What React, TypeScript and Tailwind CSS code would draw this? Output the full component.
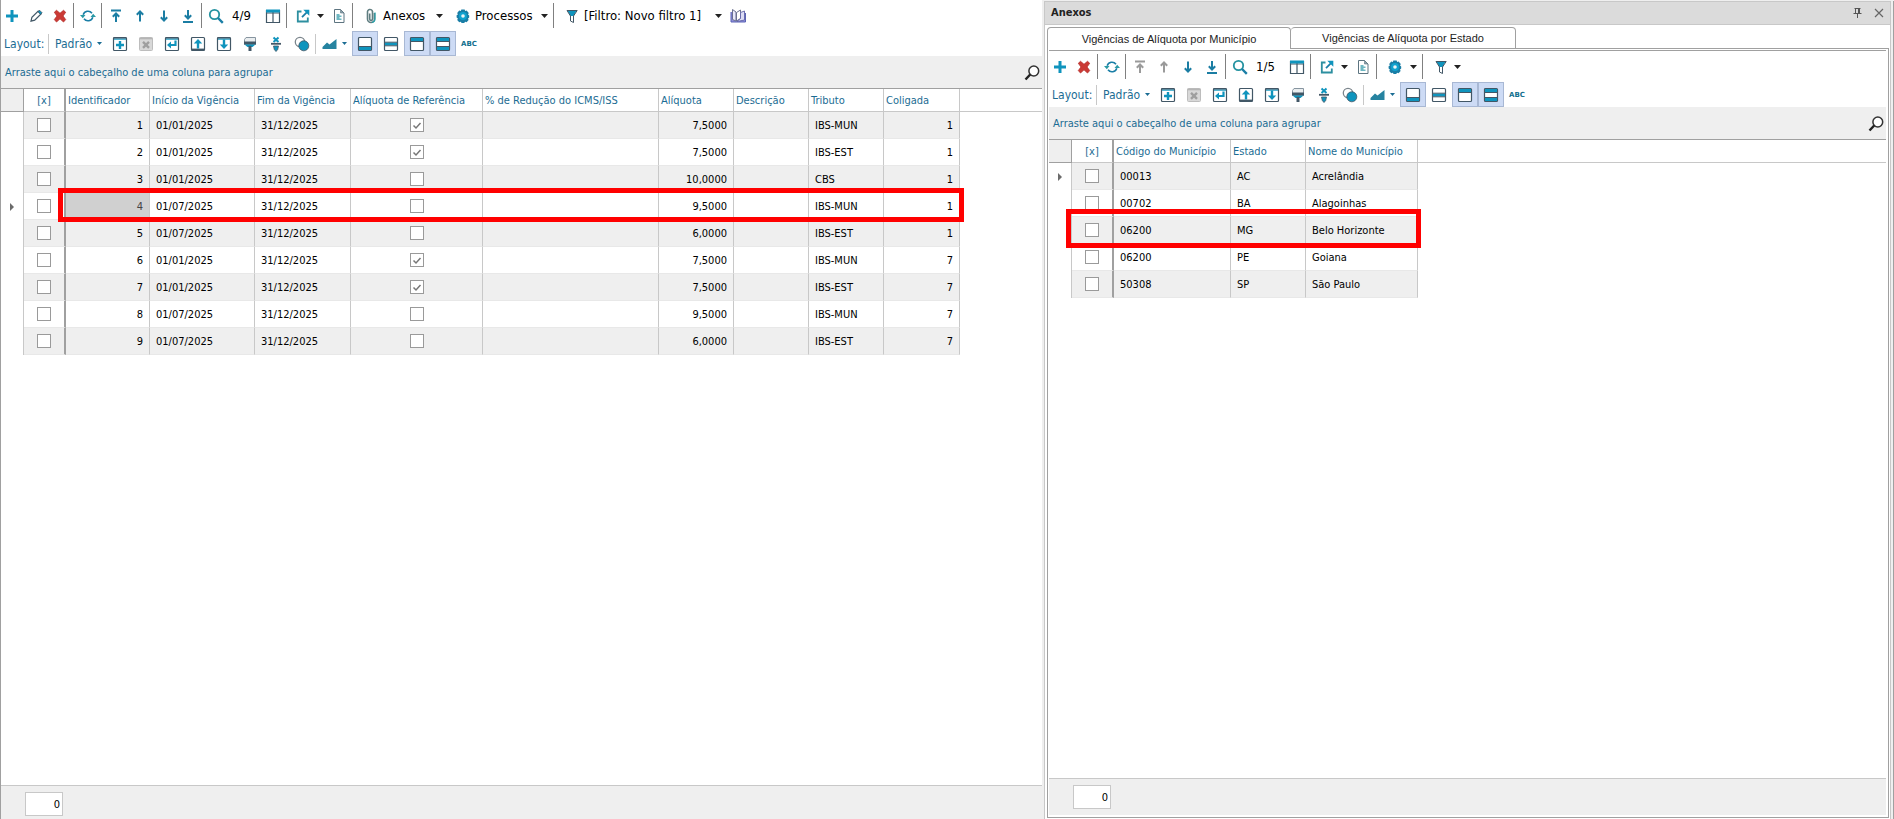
import React, { useState } from 'react';

/* ---------- Icons ---------- */

const TEAL = '#0f94bd';
const SLATE = '#425766';
const BLUE = '#1a7ea6';

const Svg = ({ children, w = 16, h = 16 }: { children: React.ReactNode; w?: number; h?: number }) => (
  <svg width={w} height={h} viewBox={`0 0 ${w} ${h}`} fill="none" className="shrink-0" aria-hidden="true">
    {children}
  </svg>
);

const PlusIcon = () => (
  <Svg><path d="M6.5 2h3v4.5H14v3H9.500V14h-3V9.500H2v-3h4.500z" fill={TEAL} /></Svg>
);

const PencilIcon = () => (
  <Svg>
    <path d="M3 13.2l.9-3.900 6.300-6.200 2.800 2.800-6.300 6.300z" stroke={SLATE} strokeWidth="1.2" />
    <path d="M10 3.800l1.500-1.600 2.600 2.600-1.500 1.600z" fill={TEAL} stroke={SLATE} strokeWidth=".8" />
  </Svg>
);

const DeleteIcon = () => (
  <Svg>
    <path d="M2.300 4.300l2.200-2L8 5.300l3.500-3 2.200 2L11 8l2.700 3.600-2.200 2.400L8 10.800 4.500 14l-2.200-2.400L5 8z" fill="#cb3a35" stroke="#b52f2b" strokeWidth=".8" />
  </Svg>
);

const RefreshIcon = () => (
  <Svg>
    <path d="M3.200 6.800A5 5 0 0 1 12 5.200M12.800 9.200A5 5 0 0 1 4 10.800" stroke={BLUE} strokeWidth="1.600" />
    <path d="M0 7h5.500L2.800 10.200zM16 9h-5.500l2.700-3.200z" fill="#2a9aa5" />
  </Svg>
);

const arrowPaths = {
  first: 'M3 2.500h10M8 14V5.500M4.800 8.700L8 5.500l3.200 3.200',
  prev: 'M8 13.500V3.500M4.800 6.700L8 3.500l3.200 3.200',
  next: 'M8 2.500v10M4.800 9.300L8 12.500l3.200-3.200',
  last: 'M3 14h10M8 2v8.500M4.800 7.300L8 10.500l3.200-3.200',
};

const ArrowIcon = ({ kind, muted }: { kind: keyof typeof arrowPaths; muted?: boolean }) => (
  <Svg><path d={arrowPaths[kind]} stroke={muted ? '#9a9a9a' : '#1b7da3'} strokeWidth="2" /></Svg>
);

const SearchIcon = () => (
  <Svg>
    <circle cx="6.500" cy="6.500" r="4.700" stroke="#2492a0" strokeWidth="1.800" />
    <path d="M10 10l4.800 4.800" stroke={BLUE} strokeWidth="2.400" />
  </Svg>
);

const ColumnsIcon = () => (
  <Svg>
    <path d="M1.500 2v12.500h13V2M8 2v12.500M1 5h14" stroke={SLATE} strokeWidth="1.200" />
    <rect x="1" y="1.500" width="14" height="3" fill={TEAL} />
  </Svg>
);

const ExportIcon = () => (
  <Svg>
    <path d="M6.500 3.500H2.800v10h10V9.500" stroke="#2d8fa0" strokeWidth="1.800" />
    <path d="M7 9.200l5-5" stroke={BLUE} strokeWidth="1.800" />
    <path d="M8.300 1.700h6v6z" fill={TEAL} />
  </Svg>
);

const DocIcon = () => (
  <Svg>
    <path d="M3.500 1.500h6L13 5v9.500H3.500z" stroke="#5d7480" />
    <path d="M9.500 1.500V5H13z" fill="#8ba2ac" stroke="#5d7480" strokeWidth=".6" />
    <path d="M5.500 6h3v1.500h2V9h-2v1.500h2V12h-5z" fill="#6db7c2" />
  </Svg>
);

const ClipIcon = () => (
  <Svg>
    <path d="M11.500 5v6a3.500 3.500 0 0 1-7 0V4.500a2.500 2.500 0 0 1 5-1V11a1.400 1.400 0 0 1-2.800 0V5.500" stroke="#5f7d80" strokeWidth="1.600" />
    <path d="M12 4.500V11a3.700 3.700 0 0 1-3 3.500" stroke="#25a3ac" strokeWidth="1.200" />
  </Svg>
);

const GearIcon = () => (
  <Svg>
    <path d="M6.300 1.500h3.400l.4 1.600 1.500-.6 2.200 2.500-.8 1.400 1.200 1v2.200l-1.200.8.600 1.600-2 2.200-1.500-.5-.9 1.300H6.600l-.8-1.300-1.600.5-2-2.200.7-1.500-1.300-.9V7.200L2.900 6.500 2.200 5l2-2.500 1.700.6z" fill={BLUE} />
    <circle cx="8" cy="8" r="4" fill="#10a2cf" />
    <circle cx="8" cy="8" r="1.800" fill="#eef4f6" />
  </Svg>
);

const FunnelIcon = () => (
  <Svg>
    <path d="M3 2h10L9.500 8H6.500z" fill={TEAL} />
    <path d="M3 2.500h10.200L9.500 8v6.500l-3-1.500V8z" stroke={SLATE} />
  </Svg>
);

const BookIcon = () => (
  <Svg w={17}>
    <path d="M1 4v10h14.500V5" fill="#8f8fdc" stroke="#5b63b5" />
    <path d="M2.500 1.500L6 4v9l-3.500-1.500z" fill="#e9e9fb" stroke="#6c7290" />
    <path d="M6.500 13V4.500L10.500 2v8.500z" fill="#fff" stroke="#6c7290" />
    <path d="M10.500 4.500L14.500 3v9l-7.500 1.500 3.500-3z" fill="#dcdcf4" stroke="#6264a8" strokeWidth=".9" />
  </Svg>
);

const Caret = ({ small }: { small?: boolean }) => (
  <Svg w={7} h={4}>
    <path d={small ? 'M1 0h5L3.500 3z' : 'M0 0h7L3.500 4z'} fill={small ? '#1b6c93' : '#222'} />
  </Svg>
);

const Frame = () => <rect x="1.500" y="1.500" width="13" height="13" rx="1" fill="#fff" stroke={SLATE} strokeWidth="1.200" />;

const FrameHead = () => (
  <>
    <path d="M1.500 2h13" stroke={SLATE} strokeWidth="1.400" />
    <path d="M2 3.200h12" stroke={TEAL} />
  </>
);

const AddLayoutIcon = () => (
  <Svg>
    <Frame />
    <FrameHead />
    <path d="M8 5v8M4 9h8" stroke={TEAL} strokeWidth="2.400" />
  </Svg>
);

const RemoveLayoutIcon = () => (
  <Svg>
    <rect x="1.500" y="1.500" width="13" height="13" rx="1" fill="#d8d8d8" stroke="#bdbdbd" />
    <path d="M1.500 2.500h13" stroke="#b5b5b5" strokeWidth="1.600" />
    <path d="M5 5.800l6 6M11 5.800l-6 6" stroke="#9f9f9f" strokeWidth="2.400" />
  </Svg>
);

const RestoreLayoutIcon = () => (
  <Svg>
    <Frame />
    <FrameHead />
    <path d="M11.500 4.500V9H6" stroke={TEAL} strokeWidth="2.200" />
    <path d="M3 9l4-3.500v7z" fill={TEAL} />
  </Svg>
);

const UploadLayoutIcon = () => (
  <Svg>
    <Frame />
    <path d="M1.500 13.500h13" stroke={SLATE} strokeWidth="1.800" />
    <path d="M8 12.500V6" stroke={TEAL} strokeWidth="2.400" />
    <path d="M3.800 7.500L8 3l4.200 4.500z" fill={TEAL} />
  </Svg>
);

const DownloadLayoutIcon = () => (
  <Svg>
    <Frame />
    <FrameHead />
    <path d="M8 3.500V10" stroke={TEAL} strokeWidth="2.400" />
    <path d="M3.800 8.500L8 13l4.200-4.500z" fill={TEAL} />
  </Svg>
);

const BrushIcon = () => (
  <Svg>
    <path d="M2.500 3.500l1.500-2h9.500v7h-11z" fill="#e9edef" stroke="#8795a0" />
    <path d="M2 5.500h12V8.500H2z" fill={SLATE} />
    <path d="M2.500 8.500h11l-3 2.500h-5z" fill={TEAL} />
    <path d="M6.500 10h3v5h-3z" fill={SLATE} />
  </Svg>
);

const ClearBrushIcon = () => (
  <Svg>
    <path d="M5.500 1.500l5 4.500M10.500 1.500l-5 4.500" stroke={TEAL} strokeWidth="2" />
    <path d="M3 7.800h10" stroke={SLATE} strokeWidth="1.800" />
    <path d="M5.500 10h5l-.8 3.500L8 15.500l-1.700-2z" fill={TEAL} stroke={SLATE} strokeWidth=".8" />
  </Svg>
);

const CirclesIcon = () => (
  <Svg>
    <circle cx="6" cy="6" r="4.700" fill="#fff" stroke="#7b858c" strokeWidth="1.300" />
    <circle cx="9.800" cy="9.800" r="5" fill={TEAL} stroke={SLATE} strokeWidth=".8" />
  </Svg>
);

const ChartIcon = () => (
  <Svg w={15}>
    <path d="M.5 13v-2L5 6.500l2.500 2L14.500 3v10z" fill="#2683a0" />
  </Svg>
);

const bands = {
  bottom: 'M2 10.500h12v3.500H2z',
  middle: 'M2 6.500h12v3H2z',
  top: 'M2 2h12v3.500H2z',
  both: 'M2 2h12v3.500H2zM2 10.500h12V14H2z',
};

const bandEdges = {
  bottom: 'M2 10.500h12',
  middle: 'M2 6.200h12M2 9.800h12',
  top: 'M2 5.500h12',
  both: 'M2 5.500h12M2 10.500h12',
};

const PanelIcon = ({ kind }: { kind: keyof typeof bands }) => (
  <Svg>
    <Frame />
    <path d={bands[kind]} fill={TEAL} />
    <path d={bandEdges[kind]} stroke={SLATE} />
  </Svg>
);

const FindIcon = () => (
  <Svg>
    <circle cx="9.800" cy="6" r="4.900" fill="#fff" stroke="#333" strokeWidth="1.500" />
    <path d="M6.200 9.500L1.500 14.500" stroke="#222" strokeWidth="2.400" />
  </Svg>
);

/* ---------- Shared controls ---------- */

const IconButton = ({ label, children }: { label: string; children: React.ReactNode }) => (
  <button type="button" aria-label={label} className="flex h-6 w-6 shrink-0 items-center justify-center">
    {children}
  </button>
);

const Separator = () => <span className="mx-px h-[25px] w-0.5 shrink-0 border-l border-[#808080]" />;

interface RecordBarProps {
  prefix: React.ReactNode;
  position: string;
  atStart?: boolean;
  children: React.ReactNode;
}

const RecordBar = ({ prefix, position, atStart, children }: RecordBarProps) => (
  <div className="-ml-px flex h-[31px] items-center text-[13px] text-black">
    {prefix}
    <Separator />
    <IconButton label="Atualizar"><RefreshIcon /></IconButton>
    <Separator />
    <IconButton label="Primeiro"><ArrowIcon kind="first" muted={atStart} /></IconButton>
    <IconButton label="Anterior"><ArrowIcon kind="prev" muted={atStart} /></IconButton>
    <IconButton label="Próximo"><ArrowIcon kind="next" /></IconButton>
    <IconButton label="Último"><ArrowIcon kind="last" /></IconButton>
    <Separator />
    <IconButton label="Procurar"><SearchIcon /></IconButton>
    <span className="w-[33px] pl-1">{position}</span>
    <IconButton label="Colunas"><ColumnsIcon /></IconButton>
    <Separator />
    <span className="ml-0.5 flex"><IconButton label="Exportar"><ExportIcon /></IconButton></span>
    <button type="button" aria-label="Opções de exportação" className="flex h-6 w-3 shrink-0 items-center pl-0.5">
      <Caret />
    </button>
    <IconButton label="Relatório"><DocIcon /></IconButton>
    <Separator />
    {children}
  </div>
);

const LayoutButton = ({ label, active, children }: { label: string; active?: boolean; children: React.ReactNode }) => (
  <button
    type="button"
    aria-label={label}
    aria-pressed={active}
    className={`flex h-[25px] w-[26px] shrink-0 items-center justify-center border ${
      active ? 'border-[#a8b8d4] bg-[#cddbf5]' : 'border-transparent'
    }`}
  >
    {children}
  </button>
);

const LayoutBar = () => (
  <div className="-ml-px flex h-[25px] items-center pl-1 text-[#1b6c93]">
    <span className="w-11 text-[12px]">Layout:</span>
    <span className="mr-1 h-5 w-px bg-[#c8c8c8]" />
    <button type="button" className="flex w-[50px] items-center justify-between pl-0.5 text-[12px]">
      Padrão <Caret small />
    </button>
    <div className="ml-1 flex items-center">
      <LayoutButton label="Novo layout"><AddLayoutIcon /></LayoutButton>
      <LayoutButton label="Excluir layout"><RemoveLayoutIcon /></LayoutButton>
      <LayoutButton label="Restaurar layout"><RestoreLayoutIcon /></LayoutButton>
      <LayoutButton label="Exportar layout"><UploadLayoutIcon /></LayoutButton>
      <LayoutButton label="Importar layout"><DownloadLayoutIcon /></LayoutButton>
      <LayoutButton label="Formatar"><BrushIcon /></LayoutButton>
      <LayoutButton label="Limpar formatação"><ClearBrushIcon /></LayoutButton>
      <LayoutButton label="Condições"><CirclesIcon /></LayoutButton>
    </div>
    <span className="h-5 w-px bg-[#c8c8c8]" />
    <button type="button" aria-label="Gráfico" className="flex h-6 w-9 items-center justify-end gap-1 pr-1">
      <ChartIcon />
      <Caret small />
    </button>
    <LayoutButton label="Rodapé" active><PanelIcon kind="bottom" /></LayoutButton>
    <LayoutButton label="Rodapé do grupo"><PanelIcon kind="middle" /></LayoutButton>
    <LayoutButton label="Painel de grupo" active><PanelIcon kind="top" /></LayoutButton>
    <LayoutButton label="Linhas alternadas" active><PanelIcon kind="both" /></LayoutButton>
    <button type="button" className="w-[26px] text-center font-['DejaVu_Sans',sans-serif] text-[7px] font-bold text-[#12708e]">ABC</button>
  </div>
);

const GroupBand = () => (
  <div className="flex h-[33px] items-center justify-between border-b border-[#a0a0a0] bg-[#efefef] pt-0.5 pr-0.5 pl-1">
    <span className="text-[#1b6c93]">Arraste aqui o cabeçalho de uma coluna para agrupar</span>
    <button type="button" aria-label="Localizar" className="flex h-6 items-center"><FindIcon /></button>
  </div>
);

const CheckBox = ({ label, defaultChecked = false }: { label: string; defaultChecked?: boolean }) => (
  <span className="inline-grid align-middle">
    <input
      type="checkbox"
      aria-label={label}
      defaultChecked={defaultChecked}
      className="peer col-start-1 row-start-1 h-3.5 w-3.5 appearance-none border border-[#9a9a9a] bg-white"
    />
    <svg
      width="14"
      height="14"
      viewBox="0 0 14 14"
      fill="none"
      className="pointer-events-none invisible col-start-1 row-start-1 peer-checked:visible"
    >
      <path d="M3.500 7.500L6 10l4.500-5" stroke="#777" strokeWidth="1.500" />
    </svg>
  </span>
);

interface Column {
  title: string;
  width: number;
  align?: 'right' | 'center';
}

type Cell = string | boolean;

interface GridProps {
  columns: Column[];
  rows: Cell[][];
  current: number;
  focusedCell?: boolean;
}

const cellAlign = {
  left: 'pl-1.5 text-left',
  right: 'pr-1.5 text-right',
  center: 'text-center',
};

function DataGrid({ columns, rows, current, focusedCell }: GridProps) {
  return (
    <table className="w-full table-fixed border-separate border-spacing-0">
      <colgroup>
        <col className="w-[23px]" />
        <col className="w-[42px]" />
        {columns.map(col => <col key={col.title} style={{ width: col.width }} />)}
        <col />
      </colgroup>
      <thead>
        <tr className="h-[23px] text-left text-[#1b6c93]">
          <th className="border-r border-b border-[#a0a0a0] bg-[#efefef] p-0" />
          <th className="border-r-2 border-b border-r-[#a0a0a0] border-b-[#c8c8c8] p-0 pt-0.5 text-center font-normal">[x]</th>
          {columns.map(col => (
            <th key={col.title} className="border-r border-b border-[#c8c8c8] p-0 pt-0.5 pl-0.5 font-normal whitespace-nowrap">
              {col.title}
            </th>
          ))}
          <th className="border-b border-[#c8c8c8] p-0" />
        </tr>
      </thead>
      <tbody>
        {rows.map((row, i) => {
          const stripe = i % 2 === 0 ? 'bg-[#efefef]' : 'bg-white';
          return (
            <tr key={i} className="h-[27px] text-black">
              <td className="border-r border-[#c8c8c8] p-0">
                {i === current && (
                  <svg width="4" height="8" viewBox="0 0 4 8" className="ml-[9px]">
                    <path d="M0 0l4 4-4 4z" fill="#6b6b6b" />
                  </svg>
                )}
              </td>
              <td className={`border-r-2 border-b border-r-[#a0a0a0] border-b-[#e8e8e8] p-0 pr-px text-center leading-none ${stripe}`}>
                <CheckBox label={`Selecionar ${row[0]}`} />
              </td>
              {row.map((value, j) => (
                <td
                  key={j}
                  className={`border-r border-b border-r-[#c8c8c8] border-b-[#e8e8e8] whitespace-nowrap ${
                    typeof value === 'boolean' ? 'p-0 leading-none' : 'pt-px pb-0'
                  } ${cellAlign[columns[j].align ?? 'left']} ${
                    focusedCell && i === current && j === 0 ? 'bg-[#d0d0d0] text-[#444]' : stripe
                  }`}
                >
                  {typeof value === 'boolean' ? (
                    <CheckBox label={columns[j].title} defaultChecked={value} />
                  ) : (
                    value
                  )}
                </td>
              ))}
              <td className="p-0" />
            </tr>
          );
        })}
      </tbody>
    </table>
  );
}

const Total = ({ label }: { label: string }) => (
  <input
    type="text"
    aria-label={label}
    readOnly
    value="0"
    className="mt-1.5 ml-6 h-6 w-[38px] border border-[#c8c8c8] bg-white pr-0.5 text-right text-black"
  />
);

/* ---------- Data ---------- */

const taxColumns: Column[] = [
  { title: 'Identificador', width: 84, align: 'right' },
  { title: 'Início da Vigência', width: 105 },
  { title: 'Fim da Vigência', width: 96 },
  { title: 'Alíquota de Referência', width: 132, align: 'center' },
  { title: '% de Redução do ICMS/ISS', width: 176 },
  { title: 'Alíquota', width: 75, align: 'right' },
  { title: 'Descrição', width: 75 },
  { title: 'Tributo', width: 75 },
  { title: 'Coligada', width: 76, align: 'right' },
];

const taxRows: Cell[][] = [
  ['1', '01/01/2025', '31/12/2025', true, '', '7,5000', '', 'IBS-MUN', '1'],
  ['2', '01/01/2025', '31/12/2025', true, '', '7,5000', '', 'IBS-EST', '1'],
  ['3', '01/01/2025', '31/12/2025', false, '', '10,0000', '', 'CBS', '1'],
  ['4', '01/07/2025', '31/12/2025', false, '', '9,5000', '', 'IBS-MUN', '1'],
  ['5', '01/07/2025', '31/12/2025', false, '', '6,0000', '', 'IBS-EST', '1'],
  ['6', '01/01/2025', '31/12/2025', true, '', '7,5000', '', 'IBS-MUN', '7'],
  ['7', '01/01/2025', '31/12/2025', true, '', '7,5000', '', 'IBS-EST', '7'],
  ['8', '01/07/2025', '31/12/2025', false, '', '9,5000', '', 'IBS-MUN', '7'],
  ['9', '01/07/2025', '31/12/2025', false, '', '6,0000', '', 'IBS-EST', '7'],
];

const cityColumns: Column[] = [
  { title: 'Código do Município', width: 117 },
  { title: 'Estado', width: 75 },
  { title: 'Nome do Município', width: 112 },
];

const cityRows: Cell[][] = [
  ['00013', 'AC', 'Acrelândia'],
  ['00702', 'BA', 'Alagoinhas'],
  ['06200', 'MG', 'Belo Horizonte'],
  ['06200', 'PE', 'Goiana'],
  ['50308', 'SP', 'São Paulo'],
];

const tabs = ['Vigências de Alíquota por Município', 'Vigências de Alíquota por Estado'];

/* ---------- Page ---------- */

export default function App() {
  const [activeTab, setActiveTab] = useState(0);

  return (
    <div className="grid h-screen grid-cols-[1044fr_850fr] overflow-hidden bg-[#efefef] font-[Tahoma,'DejaVu_Sans_Condensed','DejaVu_Sans',sans-serif] text-[11px] leading-[14px]">
      {/* Main grid */}
      <main className="mr-0.5 flex min-w-0 flex-col border-l border-[#a0a0a0] bg-white">
        <RecordBar
          position="4/9"
          prefix={
            <>
              <IconButton label="Incluir"><PlusIcon /></IconButton>
              <IconButton label="Editar"><PencilIcon /></IconButton>
              <IconButton label="Excluir"><DeleteIcon /></IconButton>
            </>
          }
        >
          <button type="button" className="ml-1 flex h-6 w-[84px] items-center gap-1 pl-1">
            <ClipIcon />
            <span className="flex-1 text-left">Anexos</span>
            <Caret />
          </button>
          <button type="button" className="flex h-6 w-[105px] items-center gap-1 pl-3">
            <GearIcon />
            <span className="flex-1 text-left">Processos</span>
            <Caret />
          </button>
          <span className="w-1" />
          <Separator />
          <button type="button" className="flex h-6 w-[166px] items-center gap-1 pl-2">
            <FunnelIcon />
            <span className="flex-1 text-left">[Filtro: Novo filtro 1]</span>
            <Caret />
          </button>
          <span className="ml-1 flex"><IconButton label="Ajuda"><BookIcon /></IconButton></span>
        </RecordBar>
        <LayoutBar />
        <GroupBand />
        <div className="relative min-h-0 flex-1">
          <DataGrid columns={taxColumns} rows={taxRows} current={3} focusedCell />
          <div className="pointer-events-none absolute top-[99px] left-[57px] h-[34px] w-[906px] border-[5px] border-[#ff0000]" />
        </div>
        <footer className="h-[34px] border-t border-[#c8c8c8] bg-[#efefef]">
          <Total label="Total de registros" />
        </footer>
      </main>

      {/* Attachments */}
      <aside className="mt-px flex min-w-0 border-r border-[#a0a0a0] pr-0.5">
        <div className="flex min-w-0 flex-1 flex-col border border-b-0 border-[#c8c8c8] bg-white">
          <header className="flex h-[23px] items-center justify-between border-b border-[#c8c8c8] bg-[#dbdbdb] px-1.5">
            <h2 className="font-bold text-[#222]">Anexos</h2>
            <div className="flex items-center gap-3">
              <button type="button" aria-label="Fixar">
                <Svg w={9} h={10}>
                  <path d="M1.500.5h6M2.500.5V5M5.500.5V5M6.500.5V5M.5 5.500h8M4.500 6v4" stroke="#555" />
                </Svg>
              </button>
              <button type="button" aria-label="Fechar">
                <Svg w={10} h={10}><path d="M1 1l8 8M9 1L1 9" stroke="#666" strokeWidth="1.200" /></Svg>
              </button>
            </div>
          </header>

          <div className="mt-0.5 flex h-[22px] items-stretch pr-px pl-0.5 font-['Liberation_Sans',Arial,sans-serif] text-[#222]" role="tablist">
            {tabs.map((tab, i) => (
              <button
                key={tab}
                type="button"
                role="tab"
                aria-selected={activeTab === i}
                onClick={() => setActiveTab(i)}
                className={`rounded-t-[4px] border-t border-r border-[#a0a0a0] ${i === 0 ? 'w-[244px] border-l' : 'w-[225px]'} ${
                  activeTab === i ? '' : 'border-b'
                }`}
              >
                {tab}
              </button>
            ))}
            <span className="flex-1 border-b border-[#a0a0a0]" />
          </div>

          <div className="mr-px mb-px ml-0.5 flex min-h-0 flex-1 flex-col border-x border-b border-[#a0a0a0] pt-px pr-0.5 pb-0.5 pl-px">
            <div className="border-t border-[#a0a0a0]">
              <RecordBar
                position="1/5"
                atStart
                prefix={
                  <>
                    <IconButton label="Incluir anexo"><PlusIcon /></IconButton>
                    <IconButton label="Excluir anexo"><DeleteIcon /></IconButton>
                  </>
                }
              >
                <button type="button" aria-label="Processos" className="flex h-6 w-[38px] items-center justify-between pl-2">
                  <GearIcon />
                  <Caret />
                </button>
                <span className="w-1" />
                <Separator />
                <button type="button" aria-label="Filtro" className="flex h-6 w-9 items-center justify-between pl-2">
                  <FunnelIcon />
                  <Caret />
                </button>
              </RecordBar>
            </div>
            <LayoutBar />
            <GroupBand />
            <div className="relative min-h-0 flex-1">
              <DataGrid columns={cityColumns} rows={cityRows} current={0} />
              <div className="pointer-events-none absolute top-[69px] left-[17px] h-[39px] w-[355px] border-[5px] border-[#ff0000]" />
            </div>
            <footer className="h-[37px] border-t border-[#c8c8c8] bg-[#efefef]">
              <Total label="Total de anexos" />
            </footer>
          </div>
        </div>
      </aside>
    </div>
  );
}
